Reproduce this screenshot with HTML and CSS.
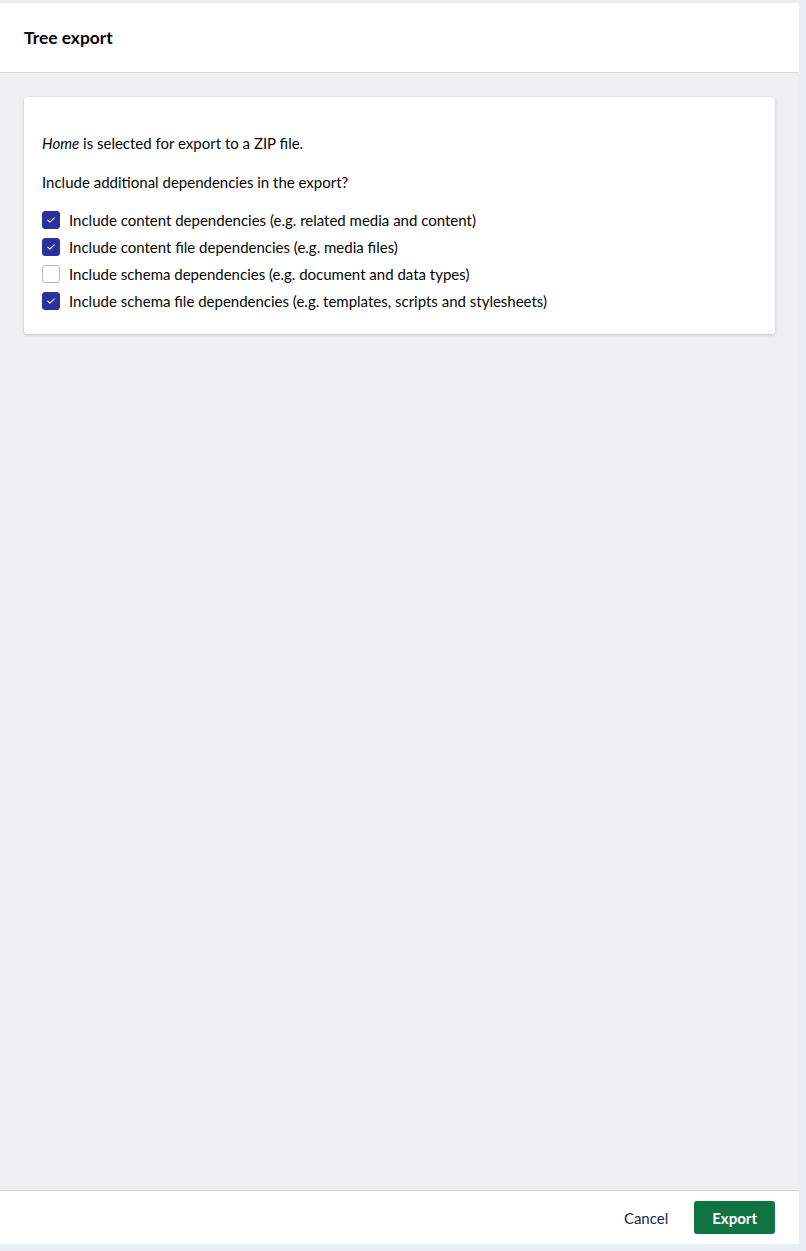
FILE: index.html
```html
<!DOCTYPE html>
<html lang="en">
<head>
<meta charset="utf-8">
<title>Tree export</title>
<link rel="stylesheet" href="styles.css">
</head>
<body>
<div class="panel">
  <header class="head">
    <h1 class="title">Tree export</h1>
  </header>
  <main class="main">
    <section class="card">
      <p class="intro"><em>Home</em> is selected for export to a ZIP file.</p>
      <p class="question">Include additional dependencies in the export?</p>
      <ul class="options">
        <li class="option">
          <span class="box checked"><svg viewBox="0 0 18 18" width="18" height="18"><path d="M5.8 9.2l2.1 2 4.3-4.4" fill="none" stroke="#fff" stroke-width="1.1" stroke-linecap="round" stroke-linejoin="round"/></svg></span>
          <span class="label">Include content dependencies (e.g. related media and content)</span>
        </li>
        <li class="option">
          <span class="box checked"><svg viewBox="0 0 18 18" width="18" height="18"><path d="M5.8 9.2l2.1 2 4.3-4.4" fill="none" stroke="#fff" stroke-width="1.1" stroke-linecap="round" stroke-linejoin="round"/></svg></span>
          <span class="label">Include content file dependencies (e.g. media files)</span>
        </li>
        <li class="option">
          <span class="box"></span>
          <span class="label">Include schema dependencies (e.g. document and data types)</span>
        </li>
        <li class="option">
          <span class="box checked"><svg viewBox="0 0 18 18" width="18" height="18"><path d="M5.8 9.2l2.1 2 4.3-4.4" fill="none" stroke="#fff" stroke-width="1.1" stroke-linecap="round" stroke-linejoin="round"/></svg></span>
          <span class="label">Include schema file dependencies (e.g. templates, scripts and stylesheets)</span>
        </li>
      </ul>
    </section>
  </main>
  <footer class="foot">
    <button class="btn btn-cancel">Cancel</button>
    <button class="btn btn-export">Export</button>
  </footer>
</div>
</body>
</html>
```

FILE: styles.css
```css
* { box-sizing: border-box; }
html, body { margin: 0; padding: 0; }
body {
  background: #e9eef6;
  font-family: Lato, "Noto Sans", sans-serif;
  color: #060606;
  font-size: 15px;
  line-height: 20px;
}
.panel {
  width: 799px;
  height: 1241px;
  margin-top: 3px;
  display: flex;
  flex-direction: column;
  background: #efeff1;
}
.head {
  height: 70px;
  background: #fff;
  border-bottom: 1px solid #d8d7d9;
  display: flex;
  align-items: center;
  padding: 0 24px;
}
.title {
  margin: 0;
  font-size: 17.4px;
  font-weight: 700;
  color: #060606;
  line-height: 24px;
}
.main {
  flex: 1;
  padding: 24px;
}
.card {
  background: #fff;
  border-radius: 3px;
  box-shadow: 0 1px 3px rgba(0,0,0,0.18), 0 0 1px rgba(0,0,0,0.08);
  padding: 36px 18px 24px 18px;
}
.intro, .question { margin: 0; }
.intro { margin-bottom: 19px; }
.question { margin-bottom: 19px; }
.options {
  list-style: none;
  margin: 0;
  padding: 0;
  display: flex;
  flex-direction: column;
  gap: 9px;
}
.option {
  display: flex;
  align-items: center;
  gap: 9px;
  height: 18px;
}
.box {
  width: 18px;
  height: 18px;
  flex: none;
  border-radius: 3px;
  border: 1px solid #b9b9c0;
  background: #fff;
  display: flex;
}
.box.checked {
  background: #2c309f;
  border-color: #2c309f;
}
.box svg { display: block; margin: -1px; }
.foot {
  height: 54px;
  background: #fff;
  border-top: 1px solid #d8d7d9;
  display: flex;
  justify-content: flex-end;
  align-items: center;
  gap: 8px;
  padding: 0 24px;
}
.btn {
  font-family: Lato, "Noto Sans", sans-serif;
  font-size: 15px;
  height: 33px;
  padding: 0 18px;
  border: 0;
  border-radius: 3px;
  background: transparent;
  cursor: pointer;
}
.btn-cancel { color: #1b264f; }
.btn-export {
  background: #0f7442;
  color: #fff;
  font-weight: 700;
}
```
